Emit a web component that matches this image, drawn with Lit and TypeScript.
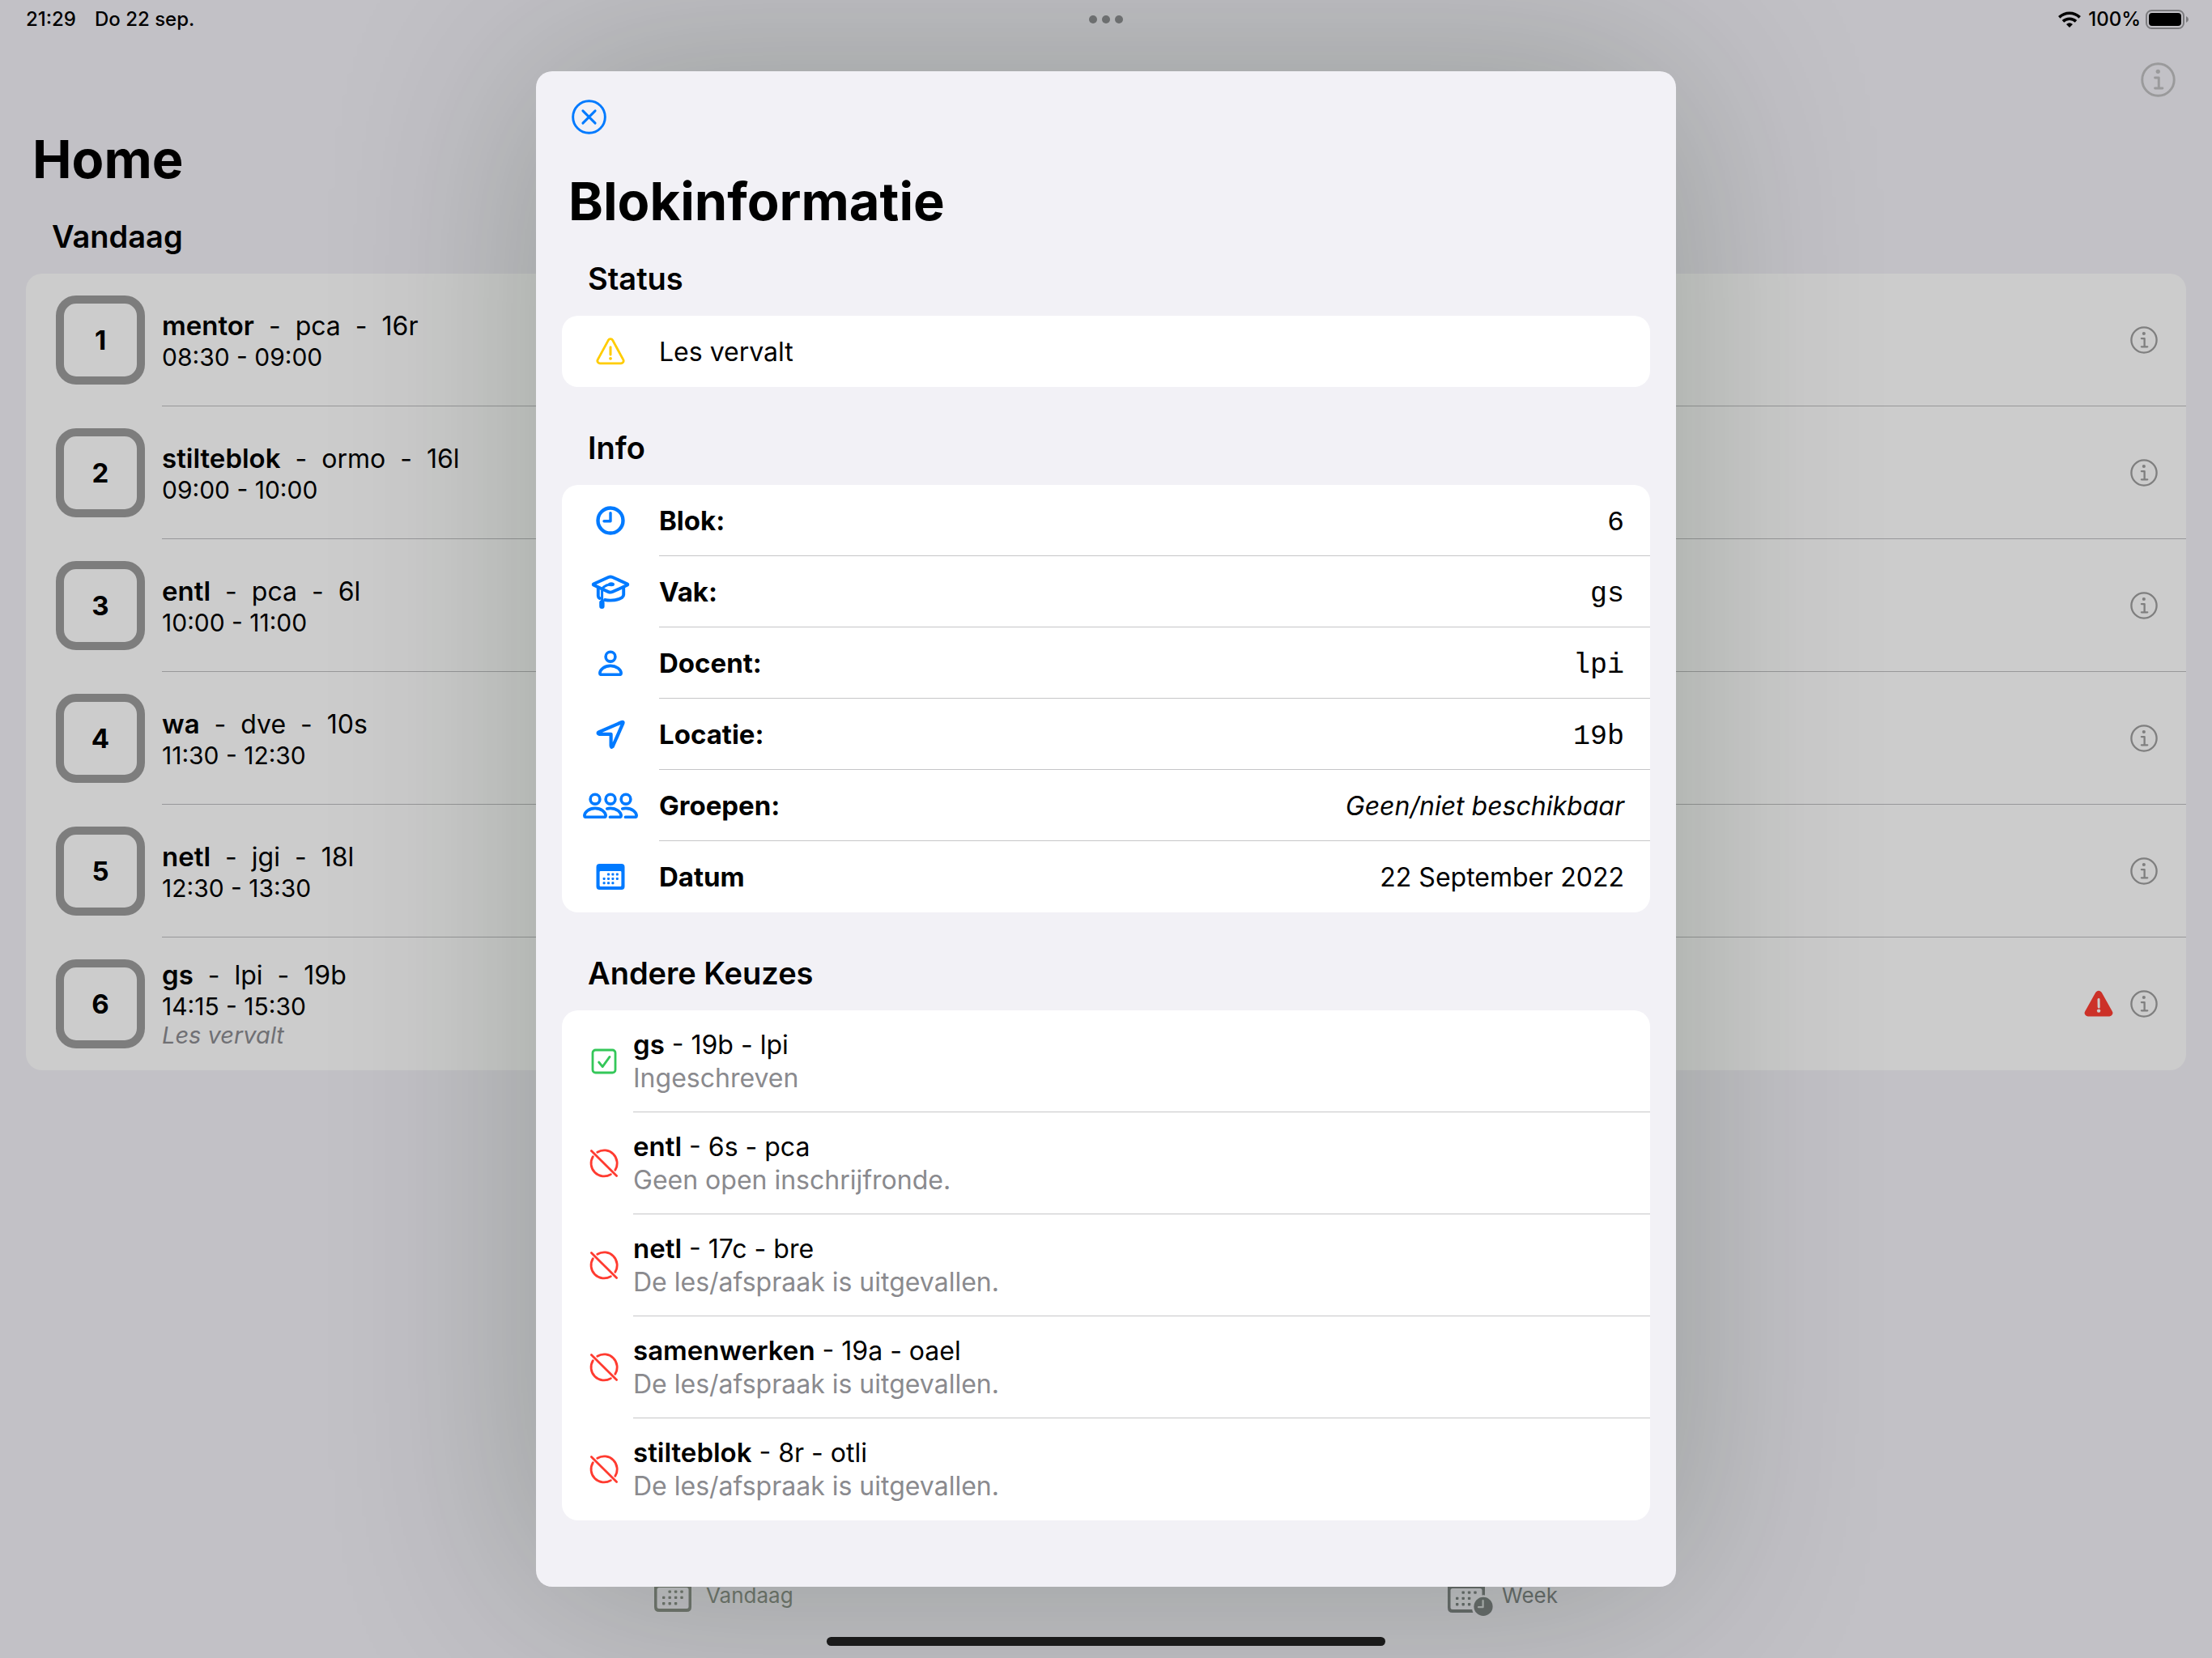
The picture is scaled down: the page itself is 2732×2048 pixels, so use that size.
import { LitElement, html, css, svg, nothing } from "lit";
import { customElement, property } from "lit/decorators.js";

interface Lesson {
  block: number;
  subject: string;
  teacher: string;
  room: string;
  time: string;
  note?: string;
}

interface Detail {
  icon: string;
  label: string;
  value: string;
  style: "mono" | "plain" | "italic";
}

interface Choice {
  subject: string;
  rest: string;
  status: string;
  enrolled: boolean;
}

const lessons: Lesson[] = [
  { block: 1, subject: "mentor", teacher: "pca", room: "16r", time: "08:30 - 09:00" },
  { block: 2, subject: "stilteblok", teacher: "ormo", room: "16l", time: "09:00 - 10:00" },
  { block: 3, subject: "entl", teacher: "pca", room: "6l", time: "10:00 - 11:00" },
  { block: 4, subject: "wa", teacher: "dve", room: "10s", time: "11:30 - 12:30" },
  { block: 5, subject: "netl", teacher: "jgi", room: "18l", time: "12:30 - 13:30" },
  { block: 6, subject: "gs", teacher: "lpi", room: "19b", time: "14:15 - 15:30", note: "Les vervalt" },
];

const details: Detail[] = [
  { icon: "clock", label: "Blok:", value: "6", style: "mono" },
  { icon: "cap", label: "Vak:", value: "gs", style: "mono" },
  { icon: "person", label: "Docent:", value: "lpi", style: "mono" },
  { icon: "location", label: "Locatie:", value: "19b", style: "mono" },
  { icon: "group", label: "Groepen:", value: "Geen/niet beschikbaar", style: "italic" },
  { icon: "calendar", label: "Datum", value: "22 September 2022", style: "plain" },
];

const choices: Choice[] = [
  { subject: "gs", rest: "19b - lpi", status: "Ingeschreven", enrolled: true },
  { subject: "entl", rest: "6s - pca", status: "Geen open inschrijfronde.", enrolled: false },
  { subject: "netl", rest: "17c - bre", status: "De les/afspraak is uitgevallen.", enrolled: false },
  { subject: "samenwerken", rest: "19a - oael", status: "De les/afspraak is uitgevallen.", enrolled: false },
  { subject: "stilteblok", rest: "8r - otli", status: "De les/afspraak is uitgevallen.", enrolled: false },
];

const gridDots = (points: number[][], size: number) =>
  points.map(([x, y]) => svg`<rect x=${x} y=${y} width=${size} height=${size} rx="0.8" fill="currentColor"/>`);

const icons: Record<string, { w: number; h: number; art: unknown }> = {
  info: {
    w: 44, h: 44,
    art: svg`<g fill="none" stroke="currentColor" stroke-width="3" stroke-linecap="round" stroke-linejoin="round">
      <circle cx="22" cy="22" r="20.2"/><path d="M18 19.5h4.8v13M18 32.8h9.5"/></g>
      <circle cx="21.8" cy="11.6" r="2.7" fill="currentColor"/>`,
  },
  close: {
    w: 44, h: 44,
    art: svg`<g fill="none" stroke="currentColor" stroke-width="3" stroke-linecap="round">
      <circle cx="22" cy="22" r="20.3"/><path d="M14.2 14.2l15.6 15.6M29.8 14.2L14.2 29.8"/></g>`,
  },
  alert: {
    w: 36, h: 34,
    art: svg`<path d="M15.3 3.3a3.1 3.1 0 0 1 5.4 0L33.8 27.4a3 3 0 0 1-2.6 4.4H4.8a3 3 0 0 1-2.6-4.400Z" fill="none" stroke="currentColor" stroke-width="2.8" stroke-linejoin="round"/>
      <path d="M18 11.800v9.200" stroke="currentColor" stroke-width="3" stroke-linecap="round"/><circle cx="18" cy="25.800" r="1.900" fill="currentColor"/>`,
  },
  alertFill: {
    w: 36, h: 34,
    art: svg`<path d="M14.2 3a4.400 4.400 0 0 1 7.600 0L34.800 26.200a4.100 4.100 0 0 1-3.600 6.200H4.800a4.100 4.100 0 0 1-3.600-6.200Z" fill="currentColor"/>
      <path d="M18 11.400l.2 9.600" stroke="#cccccc" stroke-width="3" stroke-linecap="round"/><circle cx="18.100" cy="25.600" r="2.200" fill="#cccccc"/>`,
  },
  clock: {
    w: 36, h: 36,
    art: svg`<g fill="none" stroke="currentColor" stroke-linecap="round" stroke-linejoin="round"><circle cx="18" cy="18" r="15.500" stroke-width="4.400"/><path d="M18 8.600v10.200H10" stroke-width="3.400"/></g>`,
  },
  cap: {
    w: 48, h: 42,
    art: svg`<g fill="none" stroke="currentColor" stroke-width="3.900" stroke-linecap="round" stroke-linejoin="round">
      <path d="M3.400 11.200L21.500 3Q24 1.900 26.500 3L44.600 11.200Q46 12 44.600 12.800L26.500 21.100Q24 22.200 21.500 21.100L3.400 12.800Q2 12 3.400 11.200Z"/>
      <path d="M8.800 15.600V26Q8.800 28 10.600 29M17 31Q20.400 31.600 24 31.600Q32.600 31.600 38.200 28.200Q40.200 26.800 40.200 24.600V15.600"/>
      <path d="M24 11.800Q13.600 13.600 13.600 20V33" stroke-width="3"/><path d="M13.400 34.400v4.400" stroke-width="6.400"/></g>
      <ellipse cx="25" cy="11.800" rx="4" ry="2.500" fill="currentColor"/>`,
  },
  person: {
    w: 30, h: 32,
    art: svg`<g fill="none" stroke="currentColor" stroke-width="3.600"><circle cx="15" cy="8.200" r="5.900"/><path d="M15 19.400c7.400 0 12.900 4.600 13.200 9.200 0 1-.6 1.700-1.700 1.700H3.500c-1.100 0-1.700-.7-1.700-1.700C2.100 24 7.600 19.400 15 19.400Z"/></g>`,
  },
  location: {
    w: 36, h: 36,
    art: svg`<path d="M3.400 15.400L32 3Q34.200 2.300 33.300 4.600L20.800 33Q18.600 35 18.600 32V17.900H4Q1.600 17 3.400 15.400Z" fill="none" stroke="currentColor" stroke-width="4.200" stroke-linejoin="round"/>`,
  },
  group: {
    w: 68, h: 32,
    art: svg`<g fill="none" stroke="currentColor" stroke-width="3.600" stroke-linecap="round"><circle cx="15" cy="8.200" r="5.900"/><circle cx="34" cy="8.200" r="5.900"/><circle cx="53" cy="8.200" r="5.900"/>
      <path d="M15 19.400c7.400 0 12.900 4.600 13.200 9.200 0 1-.6 1.700-1.700 1.700H3.500c-1.100 0-1.700-.7-1.700-1.700C2.100 24 7.600 19.400 15 19.400Z"/>
      <path d="M29.800 19.900Q31.600 19.400 34 19.400c7.400 0 12.900 4.600 13.200 9.200 0 1-.6 1.700-1.700 1.700H33.400"/>
      <path d="M48.800 19.900Q50.600 19.400 53 19.400c7.400 0 12.900 4.600 13.200 9.200 0 1-.6 1.700-1.700 1.700H52.400"/></g>`,
  },
  calendar: {
    w: 36, h: 32,
    art: svg`<path fill="currentColor" fill-rule="evenodd" d="M4.500 0H31.500Q35.500 0 35.500 4V28Q35.500 32 31.500 32H4.500Q.5 32 .5 28V4Q.5 0 4.500 0ZM5.800 9Q4.600 9 4.600 10.200V26.800Q4.600 28 5.800 28H30.200Q31.400 28 31.400 26.800V10.200Q31.400 9 30.200 9Z"/>
      ${gridDots([[14, 11.6], [19.400, 11.6], [24.800, 11.6], [8.600, 16.900], [14, 16.900], [19.400, 16.900], [24.800, 16.900], [8.600, 22.200], [14, 22.200], [19.400, 22.200]], 3)}`,
  },
  check: {
    w: 32, h: 32,
    art: svg`<g fill="none" stroke="currentColor" stroke-width="2.800" stroke-linecap="round" stroke-linejoin="round"><rect x="2" y="2" width="28" height="28" rx="3.600"/><path d="M9.600 17l4.600 5.600L23 10.400"/></g>`,
  },
  blocked: {
    w: 36, h: 36,
    art: svg`<g fill="none" stroke="currentColor" stroke-width="2.800" stroke-linecap="round"><path d="M2.400 2.400l31.200 31.200"/><path d="M9.800 4.200A16 16 0 0 1 31.800 26.200"/><path d="M4.400 9.600A16 16 0 0 0 26.400 31.600"/></g>`,
  },
  tabCalendar: {
    w: 46, h: 40,
    art: svg`<path fill="currentColor" fill-rule="evenodd" d="M6 0H40Q46 0 46 6V34Q46 40 40 40H6Q0 40 0 34V6Q0 0 6 0ZM6 10Q3.500 10 3.500 12.500V33.500Q3.500 36 6 36H40Q42.500 36 42.500 33.500V12.500Q42.500 10 40 10Z"/>
      ${gridDots([[17.500, 13.400], [24.900, 13.400], [32.300, 13.400], [10, 20.700], [17.500, 20.700], [24.900, 20.700], [32.300, 20.700], [10, 28], [17.500, 28], [24.900, 28]], 3.4)}`,
  },
  tabWeek: {
    w: 56, h: 50,
    art: svg`<g transform="translate(0 6)"><path fill="currentColor" d="M6 0H40Q46 0 46 6V18.500Q44.200 18.200 42.500 18.500V12.500Q42.500 10 40 10H6Q3.500 10 3.500 12.500V33.500Q3.500 36 6 36H30.200Q30.500 38.200 31.400 40H6Q0 40 0 34V6Q0 0 6 0Z"/>
      ${gridDots([[17.500, 13.400], [24.900, 13.400], [32.300, 13.400], [10, 20.700], [17.500, 20.700], [24.900, 20.700], [10, 28], [17.500, 28], [24.900, 28]], 3.4)}
      <circle cx="44" cy="32.400" r="11.600" fill="currentColor"/><path d="M43.600 25v8.200h-5.600" fill="none" stroke="#b1b4b4" stroke-width="2.200" stroke-linecap="round" stroke-linejoin="round"/></g>`,
  },
  wifi: {
    w: 28, h: 20,
    art: svg`<g fill="none" stroke="currentColor" stroke-width="3.600"><path d="M1.300 7.400A18.400 18.400 0 0 1 26.700 7.400"/><path d="M6 12.400A11.600 11.600 0 0 1 22 12.400"/></g><path d="M10 15.900Q14 12.600 18 15.900L14 20Z" fill="currentColor"/>`,
  },
  battery: {
    w: 54, h: 24,
    art: svg`<rect x="1" y="1" width="46" height="22" rx="6.500" fill="none" stroke="#7b7b7e" stroke-width="2"/><rect x="4" y="4" width="40" height="16" rx="4" fill="currentColor"/><path d="M50 8Q53 9.400 53 12T50 16Z" fill="#7b7b7e"/>`,
  },
  dots: {
    w: 42, h: 10,
    art: svg`<g fill="currentColor"><circle cx="5" cy="5" r="5"/><circle cx="21" cy="5" r="5"/><circle cx="37" cy="5" r="5"/></g>`,
  },
};

@customElement("ui-icon")
export class UiIcon extends LitElement {
  static styles = css`
    :host { display: inline-flex; flex: none; }
    svg { display: block; }
  `;

  @property() name = "info";
  @property({ type: Number }) size = 0;

  render() {
    const icon = icons[this.name];
    const width = this.size || icon.w;
    const height = Math.round((width * icon.h) / icon.w);
    return html`<svg width=${width} height=${height} viewBox="0 0 ${icon.w} ${icon.h}" aria-hidden="true">${icon.art}</svg>`;
  }
}

const shared = css`
  * { box-sizing: border-box; }
  h1, h2, p, ul, dl, dd { margin: 0; padding: 0; }
  ul { list-style: none; }
  button {
    display: flex;
    align-items: center;
    border: 0;
    padding: 0;
    background: none;
    color: inherit;
    font: inherit;
    cursor: pointer;
  }
  b { font-size: 33px; font-weight: 600; }
  .title { font-size: 65px; line-height: 84px; font-weight: 700; padding: 0 40px; }
  .section { font-size: 38px; line-height: 48px; font-weight: 600; padding: 0 32px; }
  .card { border-radius: 20px; overflow: hidden; margin-top: 22px; }
`;

@customElement("block-sheet")
export class BlockSheet extends LitElement {
  static styles = [
    shared,
    css`
      :host {
        display: block;
        background: #f2f1f6;
        border-radius: 20px;
        padding-bottom: 82px;
        box-shadow: 0 0 260px rgba(0, 30, 4, 0.23);
      }
      .bar { display: flex; padding: 35px 44px 41px; color: #007aff; }
      .group { padding: 0 32px; margin-top: 51px; }
      .title + .group { margin-top: 29px; }
      .card { background: #ffffff; }
      .row { display: flex; align-items: center; gap: 26px; padding-left: 26px; font-size: 32px; line-height: 41px; }
      .lead { display: flex; justify-content: center; flex: none; width: 68px; color: #007aff; }
      .lead.warn { color: #ffcc00; }
      .lead.ok { color: #34c759; }
      .lead.off { color: #ff3b30; }
      .body {
        display: flex;
        flex: 1;
        align-items: baseline;
        justify-content: space-between;
        padding: 24px 32px 22px 0;
        border-bottom: 1px solid #c6c6c8;
      }
      .row:last-child .body { border-bottom-color: transparent; }
      dt { font-size: 33px; font-weight: 700; }
      .mono { font-family: "Liberation Mono", monospace; font-size: 35px; line-height: 34px; }
      .italic { font-style: italic; }
      .choice { gap: 18px; padding-left: 34px; }
      .choice .lead { width: 36px; }
      .choice .body { display: block; padding: 22px 32px 21px 0; }
      .status { color: #8a8a8e; }
    `,
  ];

  render() {
    return html`
      <div class="bar"><button aria-label="Sluiten"><ui-icon name="close" size="43"></ui-icon></button></div>
      <h1 class="title">Blokinformatie</h1>
      <section class="group">
        <h2 class="section">Status</h2>
        <div class="card">
          <div class="row">
            <span class="lead warn"><ui-icon name="alert"></ui-icon></span>
            <p class="body">Les vervalt</p>
          </div>
        </div>
      </section>
      <section class="group">
        <h2 class="section">Info</h2>
        <dl class="card">
          ${details.map(
            (d) => html`<div class="row">
              <span class="lead"><ui-icon name=${d.icon}></ui-icon></span>
              <div class="body"><dt>${d.label}</dt><dd class=${d.style}>${d.value}</dd></div>
            </div>`
          )}
        </dl>
      </section>
      <section class="group">
        <h2 class="section">Andere Keuzes</h2>
        <ul class="card">
          ${choices.map(
            (c) => html`<li class="row choice">
              <span class="lead ${c.enrolled ? "ok" : "off"}"><ui-icon name=${c.enrolled ? "check" : "blocked"}></ui-icon></span>
              <div class="body"><p><b>${c.subject}</b> - ${c.rest}</p><p class="status">${c.status}</p></div>
            </li>`
          )}
        </ul>
      </section>
    `;
  }
}

@customElement("app-root")
export class AppRoot extends LitElement {
  static styles = [
    shared,
    css`
      :host {
        display: block;
        position: relative;
        overflow: hidden;
        background: #c2c1c6;
        color: #000000;
        font-family: Inter, "Liberation Sans", sans-serif;
      }
      .home { display: flex; flex-direction: column; min-height: 100vh; }
      .statusbar {
        display: grid;
        grid-template-columns: 1fr auto 1fr;
        align-items: center;
        height: 48px;
        padding: 0 28px;
        font-size: 24px;
        line-height: 30px;
        font-weight: 500;
      }
      .when { display: flex; gap: 23px; padding-left: 4px; }
      .multitask { color: #757578; }
      .power { display: flex; align-items: center; justify-content: flex-end; gap: 6px; }
      .power ui-icon:first-child { padding-right: 3px; }
      .nav { display: flex; justify-content: flex-end; align-items: center; height: 100px; padding: 0 45px; margin-bottom: 7px; color: #9a9a9b; }
      .today { padding: 0 32px; margin-top: 29px; }
      .today .card { background: #cccccc; }
      .lesson { display: flex; align-items: center; gap: 21px; padding-left: 37px; }
      .block {
        display: flex;
        align-items: center;
        justify-content: center;
        flex: none;
        width: 110px;
        height: 110px;
        border: 10px solid #7d7d7d;
        border-radius: 25px;
        font-size: 33px;
        font-weight: 700;
      }
      .body {
        display: flex;
        flex: 1;
        align-items: center;
        gap: 21px;
        height: 164px;
        padding-right: 35px;
        border-bottom: 1px solid #98989a;
        color: #7f7f7f;
      }
      .lesson:last-child .body { border-bottom-color: transparent; }
      .text { flex: 1; padding-top: 2px; color: #000000; font-size: 30px; line-height: 36px; }
      .line { display: flex; align-items: baseline; gap: 18px; font-size: 32px; line-height: 41px; }
      .note { font-size: 29px; font-style: italic; color: #707074; }
      .alert { color: #cc3128; }
      .tabs {
        display: flex;
        justify-content: space-between;
        align-items: center;
        width: min(1116px, 100%);
        margin: auto auto 55px;
        font-size: 26px;
        line-height: 30px;
        color: #686c6c;
      }
      .tab { gap: 18px; height: 44px; }
      .tab.active { color: #71766f; }
      .tab.week { gap: 11px; }
      .indicator {
        position: absolute;
        left: 50%;
        bottom: 15px;
        width: 690px;
        height: 11px;
        margin-left: -345px;
        border-radius: 6px;
        background: #1a1a1a;
      }
      .overlay { position: absolute; inset: 0; display: flex; align-items: center; justify-content: center; }
      block-sheet { flex: none; width: min(1408px, 100%); }
    `,
  ];

  render() {
    return html`
      <main class="home">
        <header class="statusbar">
          <div class="when"><span>21:29</span><span>Do 22 sep.</span></div>
          <ui-icon class="multitask" name="dots"></ui-icon>
          <div class="power"><ui-icon name="wifi"></ui-icon><span>100%</span><ui-icon name="battery"></ui-icon></div>
        </header>
        <div class="nav"><button aria-label="Informatie"><ui-icon name="info" size="43"></ui-icon></button></div>
        <h1 class="title">Home</h1>
        <section class="today">
          <h2 class="section">Vandaag</h2>
          <ul class="card">
            ${lessons.map(
              (l) => html`<li class="lesson">
                <span class="block">${l.block}</span>
                <div class="body">
                  <div class="text">
                    <p class="line"><b>${l.subject}</b><span>-</span><span>${l.teacher}</span><span>-</span><span>${l.room}</span></p>
                    <p>${l.time}</p>
                    ${l.note ? html`<p class="note">${l.note}</p>` : nothing}
                  </div>
                  ${l.note ? html`<ui-icon class="alert" name="alertFill"></ui-icon>` : nothing}
                  <button aria-label="Informatie over blok ${l.block}"><ui-icon name="info" size="34"></ui-icon></button>
                </div>
              </li>`
            )}
          </ul>
        </section>
        <nav class="tabs">
          <button class="tab active"><ui-icon name="tabCalendar"></ui-icon>Vandaag</button>
          <button class="tab week"><ui-icon name="tabWeek"></ui-icon>Week</button>
        </nav>
      </main>
      <div class="overlay"><block-sheet role="dialog" aria-label="Blokinformatie"></block-sheet></div>
      <div class="indicator"></div>
    `;
  }
}
